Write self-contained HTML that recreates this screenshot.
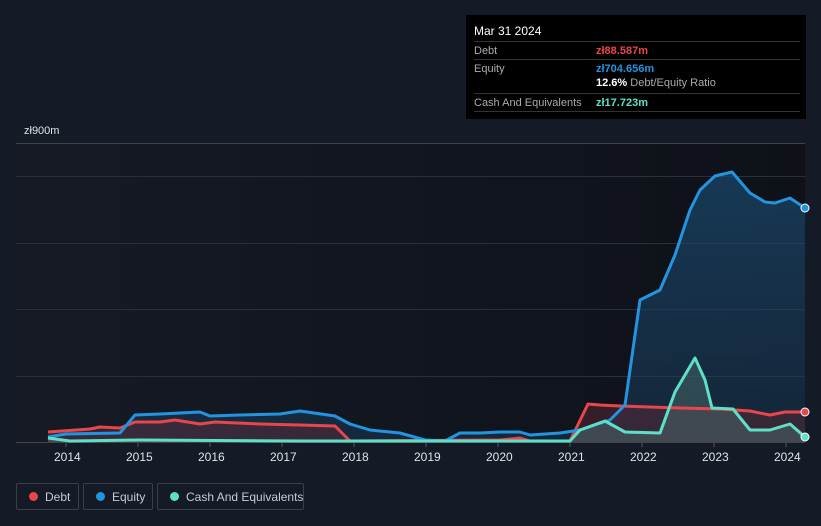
<!DOCTYPE html>
<html><head><meta charset="utf-8"><style>
body{margin:0;width:821px;height:526px;background:#151b26;font-family:"Liberation Sans",sans-serif;overflow:hidden;position:relative}
.tt{position:absolute;left:466px;top:15px;width:340px;height:104px;background:#000;color:#fff;font-size:11px}
.tt .r{position:absolute;left:8px;width:326px;border-top:1px solid #333;height:18px}
.tt span{position:absolute;top:3px}
.lg{position:absolute;top:483px;height:27px;border:1px solid #3a3f4a;border-radius:2px;color:#c8cbd0;font-size:12px;box-sizing:border-box}
.lg i{position:absolute;left:12px;top:8px;width:9px;height:9px;border-radius:50%}
.lg b{font-weight:normal;position:absolute;left:28px;top:6px;white-space:nowrap}
.ax{position:absolute;top:450px;color:#e0e2e6;font-size:12px}
</style></head><body>
<div class="tt">
<div style="position:absolute;left:8px;top:9px;font-size:12px">Mar 31 2024</div>
<div class="r" style="top:26px"><span style="color:#aaa">Debt</span><span style="left:122px;color:#e8464a;font-weight:bold">zł88.587m</span></div>
<div class="r" style="top:44px"><span style="color:#aaa">Equity</span><span style="left:122px;color:#2394e0;font-weight:bold">zł704.656m</span></div>
<div style="position:absolute;left:130px;top:62px"><b>12.6%</b> <span style="color:#aaa;position:static">Debt/Equity Ratio</span></div>
<div class="r" style="top:78px"><span style="color:#aaa">Cash And Equivalents</span><span style="left:122px;color:#5ee0c8;font-weight:bold">zł17.723m</span></div>
<div class="r" style="top:96px;height:0"></div>
</div>
<div style="position:absolute;left:24px;top:125px;color:#e0e2e6;font-size:11px">zł900m</div>
<div style="position:absolute;left:24px;top:425px;color:#e0e2e6;font-size:11px">zł0</div>
<svg width="821" height="526" style="position:absolute;left:0;top:0">
<defs><linearGradient id="bg" x1="0" x2="1"><stop offset="0" stop-color="#151a25"/><stop offset="1" stop-color="#0e1118"/></linearGradient>
<linearGradient id="eq" x1="0" y1="0" x2="0" y2="1"><stop offset="0" stop-color="#1a4a70" stop-opacity=".7"/><stop offset="1" stop-color="#1a3a58" stop-opacity=".5"/></linearGradient></defs>
<rect x="16" y="143" width="789" height="300" fill="url(#bg)"/>
<g stroke="#2a2f38" stroke-width="1"><line x1="16" x2="805" y1="143.5" y2="143.5" stroke="#444"/><line x1="16" x2="805" y1="176.5" y2="176.5"/><line x1="16" x2="805" y1="243.5" y2="243.5"/><line x1="16" x2="805" y1="309.5" y2="309.5"/><line x1="16" x2="805" y1="376.5" y2="376.5"/><line x1="16" x2="805" y1="442.5" y2="442.5" stroke="#444"/></g>
<path fill="url(#eq)" d="M48,437 L66,434 L120,433 L135,415 L160,414 L200,412 L210,416 L240,415 L280,414 L300,411 L335,416 L350,424 L370,430 L400,433 L425,440 L445,441 L460,433 L480,433 L500,432 L520,432 L530,435 L560,433 L580,430 L610,420 L625,405 L640,300 L650,295 L660,290 L675,255 L690,210 L700,190 L715,176 L732,172 L750,193 L765,202 L775,203 L790,198 L805,208 L805,442 L48,442Z"/>
<path fill="#5a2a35" opacity=".5" d="M48,432 L90,429 L100,427 L120,428 L135,422 L160,422 L175,420 L200,424 L215,422 L260,424 L300,425 L335,426 L350,441 L570,441 L588,404 L600,405 L620,406 L680,408 L720,409 L750,411 L770,415 L785,412 L805,412 L805,442 L48,442Z"/>
<path fill="#4a6a6a" opacity=".5" d="M48,438 L70,441 L570,441 L580,430 L605,421 L625,432 L660,433 L675,392 L695,358 L705,380 L712,408 L733,409 L750,430 L770,430 L790,424 L805,437 L805,442 L48,442Z"/>
<g fill="none" stroke-width="3" stroke-linejoin="round">
<path stroke="#e8464a" d="M48,432 L90,429 L100,427 L120,428 L135,422 L160,422 L175,420 L200,424 L215,422 L260,424 L300,425 L335,426 L350,441 L500,440 L520,438 L530,441 L570,441 L588,404 L600,405 L620,406 L680,408 L720,409 L750,411 L770,415 L785,412 L805,412"/>
<path stroke="#2394e0" d="M48,437 L66,434 L120,433 L135,415 L160,414 L200,412 L210,416 L240,415 L280,414 L300,411 L335,416 L350,424 L370,430 L400,433 L425,440 L445,441 L460,433 L480,433 L500,432 L520,432 L530,435 L560,433 L580,430 L610,420 L625,405 L640,300 L650,295 L660,290 L675,255 L690,210 L700,190 L715,176 L732,172 L750,193 L765,202 L775,203 L790,198 L805,208"/>
<path stroke="#5ee0c8" d="M48,438 L70,441 L140,440 L300,441 L570,441 L580,430 L605,421 L625,432 L660,433 L675,392 L695,358 L705,380 L712,408 L733,409 L750,430 L770,430 L790,424 L805,437"/>
</g>
<circle cx="805" cy="412" r="4" fill="#e8464a" stroke="#fff" stroke-width="1"/>
<circle cx="805" cy="208" r="4" fill="#2394e0" stroke="#fff" stroke-width="1"/>
<circle cx="805" cy="437" r="4" fill="#5ee0c8" stroke="#fff" stroke-width="1"/>
<g stroke="#555"><line x1="66" x2="66" y1="443" y2="447"/><line x1="138" x2="138" y1="443" y2="447"/><line x1="210" x2="210" y1="443" y2="447"/><line x1="282" x2="282" y1="443" y2="447"/><line x1="354" x2="354" y1="443" y2="447"/><line x1="426" x2="426" y1="443" y2="447"/><line x1="498" x2="498" y1="443" y2="447"/><line x1="570" x2="570" y1="443" y2="447"/><line x1="642" x2="642" y1="443" y2="447"/><line x1="714" x2="714" y1="443" y2="447"/><line x1="786" x2="786" y1="443" y2="447"/></g>
</svg>
<div class="ax" style="left:54px">2014</div><div class="ax" style="left:126px">2015</div><div class="ax" style="left:198px">2016</div><div class="ax" style="left:270px">2017</div><div class="ax" style="left:342px">2018</div><div class="ax" style="left:414px">2019</div><div class="ax" style="left:486px">2020</div><div class="ax" style="left:558px">2021</div><div class="ax" style="left:630px">2022</div><div class="ax" style="left:702px">2023</div><div class="ax" style="left:774px">2024</div>
<div class="lg" style="left:16px;width:63px"><i style="background:#e8464a"></i><b>Debt</b></div>
<div class="lg" style="left:83px;width:70px"><i style="background:#2394e0"></i><b>Equity</b></div>
<div class="lg" style="left:157px;width:147px"><i style="background:#5ee0c8"></i><b>Cash And Equivalents</b></div>
</body></html>
